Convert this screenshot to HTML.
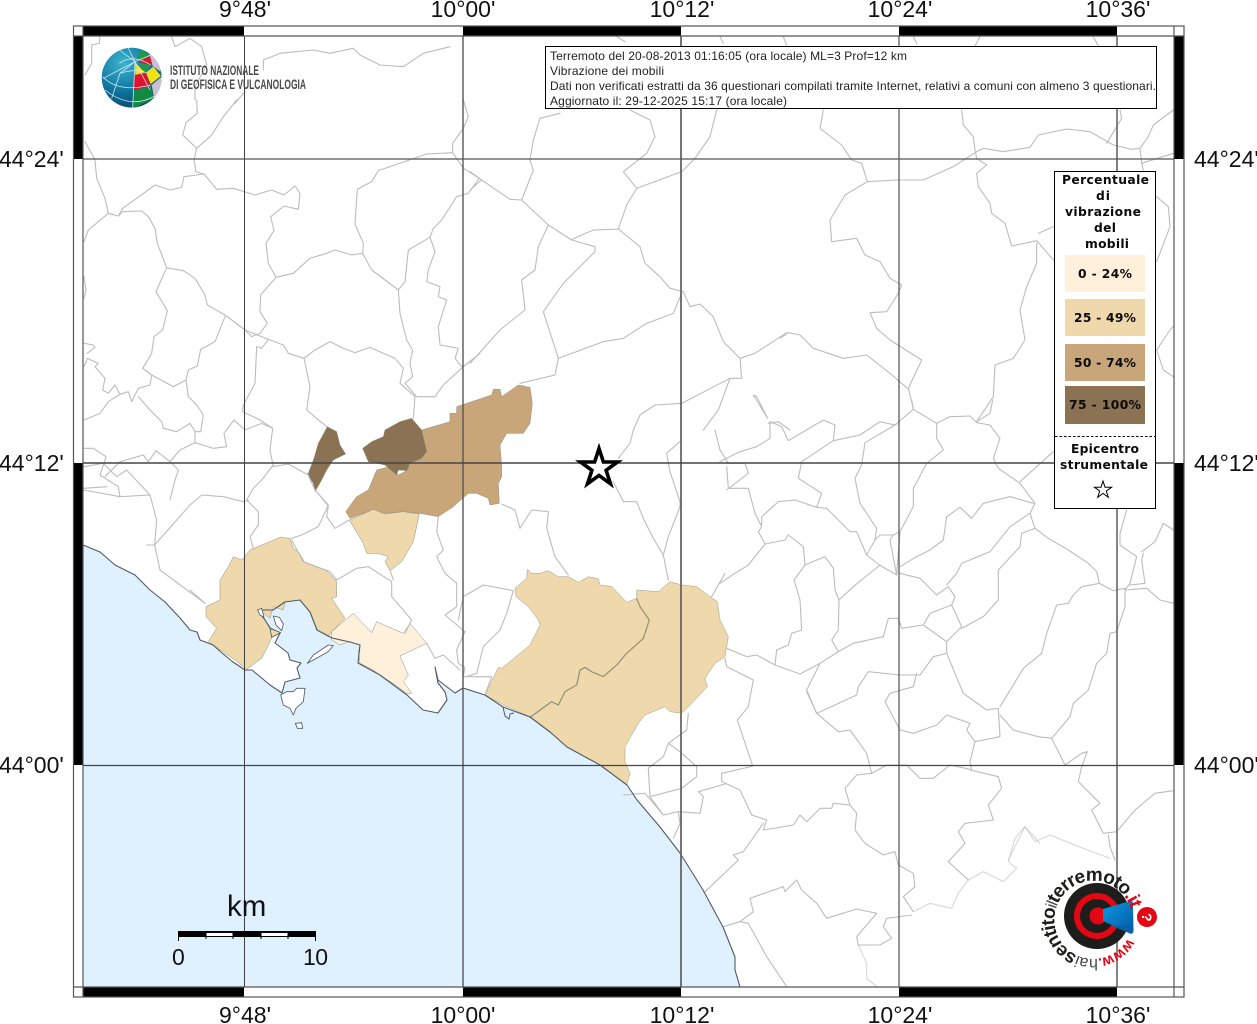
<!DOCTYPE html>
<html><head><meta charset="utf-8"><title>Vibrazione dei mobili</title>
<style>
html,body{margin:0;padding:0;background:#fff}
svg{display:block}
.ax{font-family:"Liberation Sans",sans-serif;font-size:23px;fill:#111}
.lg{font-family:"DejaVu Sans",sans-serif;font-weight:bold;font-size:12.3px;fill:#0a0a0a}
.in{font-family:"Liberation Sans",sans-serif;font-size:12px;fill:#222}
.m{fill:none;stroke:#bcbcbc;stroke-width:3.3;stroke-linejoin:round;stroke-linecap:round}
</style></head><body>
<svg width="1257" height="1024" viewBox="0 0 1257 1024" xmlns="http://www.w3.org/2000/svg">
<defs>
<filter id="bl" x="0" y="0" width="100%" height="100%" filterUnits="userSpaceOnUse"><feGaussianBlur stdDeviation=".35"/></filter>
<radialGradient id="gb" cx="35%" cy="25%" r="85%"><stop offset="0" stop-color="#3db4cf"/><stop offset=".55" stop-color="#0f76a0"/><stop offset="1" stop-color="#083f66"/></radialGradient>
<linearGradient id="mg" x1="0" y1="0" x2="1" y2="1"><stop offset="0" stop-color="#0a9ae0"/><stop offset="1" stop-color="#0558a5"/></linearGradient>
<clipPath id="gc"><circle cx="215" cy="203" r="90"/></clipPath>
<path id="tc2" d="M1127.7,938.3 A39,39 0 1 1 1132.2,916.6"/>
</defs>
<rect width="1257" height="1024" fill="#fff"/>

<!-- sea -->
<path fill="#dff1ff" d="M83,545 L100,552 L115,565 L135,575 L150,590 L165,602 L180,618 L190,630 L197,632 L200,640 L213,645 L222,653 L233,662 L245,670 L252,670 L270,685 L282,693 L285,682 L300,678 L297,668 L301,663 L290,660 L288,653 L275,643 L280,633 L270,628 L265,620 L258,610 L273,610 L285,602 L300,600 L310,612 L317,630 L332,638 L350,642 L360,645 L358,663 L380,675 L407,695 L423,710 L438,713 L447,700 L445,692 L438,683 L435,667 L438,680 L455,693 L463,688 L485,695 L503,707 L530,717 L550,732 L567,747 L600,765 L627,785 L637,800 L660,827 L680,853 L703,890 L723,927 L735,957 L735,970 L740,987 L83,987 Z"/>

<g filter="url(#bl)">
<!-- choropleth -->
<g transform="translate(190,380) scale(.33333)" stroke="#8f8f80" stroke-width="1.5" stroke-linejoin="round">
<path fill="#8a7253" d="M412,140 L440,155 L450,195 L467,222 L430,240 L410,270 L395,300 L375,335 L370,310 L353,285 L372,235 L385,190 Z"/>
<path fill="#c9a67a" d="M467,395 L500,350 L535,330 L560,270 L590,262 L625,285 L650,272 L665,245 L710,215 L695,150 L780,125 L780,100 L800,100 L800,80 L905,45 L910,28 L930,28 L935,50 L985,15 L1020,22 L1027,70 L1020,130 L1000,160 L950,160 L930,195 L935,260 L935,290 L925,310 L928,370 L900,375 L895,355 L860,340 L835,340 L790,380 L745,410 L690,400 L640,395 L580,400 L550,388 L480,415 Z"/>
<path fill="#8a7253" d="M518,205 L545,185 L580,170 L585,150 L630,125 L665,115 L695,150 L710,215 L695,235 L660,250 L650,272 L625,270 L620,285 L585,255 L535,245 Z"/>
<path fill="#eed8ac" d="M478,420 L550,388 L585,402 L640,395 L688,402 L670,485 L635,545 L600,572 L585,545 L595,530 L565,520 L530,520 L520,490 Z"/>
<path fill="#eed8ac" d="M48,680 L90,660 L90,600 L115,560 L130,530 L155,540 L180,510 L240,485 L270,472 L300,475 L310,505 L325,515 L345,548 L410,572 L440,605 L440,650 L425,655 L465,715 L425,755 L415,770 L380,750 L360,695 L330,660 L285,665 L280,690 L250,680 L240,715 L220,700 L205,690 L225,720 L240,740 L245,775 L215,835 L170,868 L135,840 L55,785 L80,745 L48,710 Z"/>
<path fill="#fff0dc" d="M425,755 L490,700 L545,758 L560,725 L640,760 L660,730 L710,790 L630,828 L655,885 L640,905 L665,940 L650,940 L610,910 L575,890 L550,870 L510,850 L505,815 L510,795 L480,785 L450,795 L425,780 Z"/>
</g>
<g transform="translate(470,430) scale(.33333)" stroke="#9b9a88" stroke-width="1.5" stroke-linejoin="round">
<path fill="#eed8ac" d="M45,795 L85,712 L95,715 L180,645 L210,585 L205,570 L175,530 L138,500 L135,475 L170,445 L172,418 L185,430 L210,430 L235,422 L265,440 L295,440 L325,457 L355,440 L385,447 L390,465 L425,470 L445,490 L470,517 L500,505 L500,480 L565,485 L600,455 L635,465 L680,470 L720,500 L742,515 L750,570 L775,620 L765,680 L735,700 L705,745 L712,770 L660,825 L635,850 L600,845 L585,830 L525,855 L505,880 L465,950 L465,995 L480,1030 L470,1065 L390,1005 L290,950 L240,905 L180,860 L100,825 Z"/>
<path fill="none" stroke="#85826f" stroke-width="3" d="M500,505 L510,530 L538,570 L520,625 L470,670 L440,705 L400,740 L365,725 L345,712 L330,720 L320,765 L285,785 L265,825 L245,815 L180,862"/>
</g>

<!-- municipal boundaries: NW -->
<g transform="translate(80,100) scale(.33333)">
<path class="m" d="M350,0 L352,40 L318,68 L308,105 L350,145 L342,180 L348,215 L372,222 L410,268 L460,265 L525,285 L575,270 L612,285 L645,258 L660,280 L655,328 L612,318 L572,350 L582,392 L558,430 L565,490 L588,532"/>
<path class="m" d="M470,0 L430,50 L395,105 L350,145"/>
<path class="m" d="M15,125 L45,180 L50,235 L75,295 L85,340 L115,348 L128,325 L170,295 L225,255 L270,270 L305,262 L312,230 L372,222"/>
<path class="m" d="M115,348 L128,335 L185,333 L205,350 L225,385 L232,430 L260,503 L310,512 L345,535 L375,585 L382,615 L435,645 L495,690 L515,710 L540,700 L562,670 L540,635 L542,585 L588,532 L640,520 L690,475 L740,460 L765,450 L815,465 L848,460 L875,510 L955,570 L975,545 L985,450 L1050,412 L1060,385 L1085,360 L1130,290 L1165,280 L1198,235 L1150,205 L1118,158 L1040,162 L895,212 L875,245 L832,268 L825,372 L850,430 L848,460"/>
<path class="m" d="M1118,158 L1118,130 L1150,85 L1165,50 L1150,0"/>
<path class="m" d="M85,340 L25,390 L12,425"/>
<path class="m" d="M260,503 L228,575 L262,632 L248,690 L222,710 L215,760 L188,805 L215,825 L280,860 L318,840 L325,810 L352,798 L362,748 L405,725 L435,650"/>
<path class="m" d="M215,825 L210,855 L175,865 L155,905 L145,875 L120,883 L105,855 L85,880 L68,870 L75,835 L45,800 L55,790 L22,775 L12,800 M12,730 L40,735 L45,742 L22,760"/>
<path class="m" d="M120,883 L85,905 L60,940 L12,960"/>
<path class="m" d="M175,890 L210,930 L245,965 L250,985 L290,995 L330,970 L345,995 L362,995 L370,945 L350,915 L325,890 L318,840"/>
<path class="m" d="M345,995 L345,1028 L400,1045 L440,1040 L432,1000 L462,960 L495,990 L545,970 L578,985 L570,1050 L580,1100 L625,1092 L685,1125"/>
<path class="m" d="M270,1085 L300,1050 L345,1028"/>
<path class="m" d="M490,915 L488,935 L540,960 L578,985"/>
<path class="m" d="M490,915 L525,850 L530,740 L545,745 L565,718 L610,735 L625,760 L672,775 L690,860 L680,930 L740,980"/>
<path class="m" d="M495,690 L565,718"/>
<path class="m" d="M672,775 L705,750 L750,725 L790,745 L825,758 L870,742 L945,775 L970,805 L960,850 L1005,890 L1000,955"/>
<path class="m" d="M955,570 L960,640 L980,720 L998,750 L990,790 L998,830 L975,850 L1010,890 L1065,890 L1090,855 L1150,800 L1200,760"/>
<path class="m" d="M1050,412 L1065,455 L1045,510 L1040,545 L1080,560 L1075,590 L1100,600 L1075,680 L1080,735 L1135,745 L1125,775 L1145,800"/>
<path class="m" d="M12,1045 L40,1045 L78,1070 L60,1125 L115,1160 L120,1190"/>
<path class="m" d="M12,1165 L80,1160"/>
<path class="m" d="M75,1130 L120,1085 L190,1065 L205,1085 L228,1052 L270,1085 L295,1110 L285,1140 L270,1200"/>
<path class="m" d="M12,530 L18,570 L12,595"/>
</g>

<!-- SW -->
<g transform="translate(190,380) scale(.33333)">
<path class="m" d="M250,255 L215,300 L190,325 L170,360 L205,395 L205,435 L180,470 L190,505"/>
<path class="m" d="M0,375 L35,345 L100,350 L160,365 L175,360"/>
<path class="m" d="M352,280 L375,330 L415,375 L385,440 L335,465 L305,475"/>
<path class="m" d="M380,335 L415,378 L410,410 L435,445 L478,420"/>
<path class="m" d="M305,480 L340,545 L420,575 L440,600 L500,565 L535,560 L605,605 L605,650 L665,720 L645,760"/>
<path class="m" d="M600,570 L610,600"/>
<path class="m" d="M745,410 L740,455 L760,510 L740,530 L765,580 L800,610 L800,680 L765,705 L825,755 L800,810 L805,850 L820,860"/>
<path class="m" d="M710,790 L735,835 L760,825 L810,870"/>
<path class="m" d="M825,860 L820,890 L905,890 L885,945"/>
<path class="m" d="M805,720 L820,650 L880,615 L970,632 L950,700 L930,750 L880,800 L860,880 L830,890"/>
<path class="m" d="M0,630 L45,670"/>
<path class="m" d="M-318,330 L-210,350 L-120,345 L-100,420 L-106,495 L0,375"/>
<path class="m" d="M-130,495 L-106,495 L-90,570 L45,670"/>
<path class="m" d="M-318,260 L-260,250 L-220,290 L-190,270 L-120,345"/>
</g>

<!-- centre south -->
<g transform="translate(470,430) scale(.33333)">
<path class="m" d="M490,0 L480,40 L445,85"/>
<path class="m" d="M430,155 L460,215 L500,215 L520,265 L550,325 L580,375 L595,450"/>
<path class="m" d="M635,30 L590,70 L600,125 L630,215 L630,230 L595,320 L580,375"/>
<path class="m" d="M95,222 L135,240 L150,295 L185,240 L235,245 L230,295 L255,380 L295,435"/>
<path class="m" d="M725,500 L765,430"/>
<path class="m" d="M735,0 L750,60 L775,100"/>
</g>

<!-- north centre -->
<g transform="translate(470,30) scale(.33333)">
<path class="m" d="M270,250 L210,265 L190,330 L180,390 L190,420 L155,510"/>
<path class="m" d="M0,480 L35,450 L120,508 L155,510 L235,585 L305,630 L375,650 L375,665 L280,760 L220,845 L265,985 L400,935 L460,925 L530,880 L610,850 L635,790"/>
<path class="m" d="M0,425 L35,450"/>
<path class="m" d="M235,585 L205,650 L195,720 L155,750 L165,840 L90,900 L0,1000"/>
<path class="m" d="M305,628 L370,600 L445,597 L510,650 L525,700 L570,740 L600,775 L640,785 L660,830 L690,822 L730,860 L760,935 L810,985 L855,970 L950,908"/>
<path class="m" d="M445,597 L470,525 L500,475 L460,425 L530,370 L555,320 L540,270 L480,240"/>
<path class="m" d="M500,475 L635,425 L675,385 L720,320 L740,240"/>
<path class="m" d="M265,985 L255,1035 L150,1060"/>
<path class="m" d="M810,985 L815,1045 L780,1045 L635,1120 L555,1125 L510,1155 L490,1200"/>
<path class="m" d="M780,1045 L745,1140 L700,1200"/>
<path class="m" d="M850,1095 L860,1100 L893,1165 Z"/>
<path class="m" d="M895,1180 L925,1175 L960,1200"/>
<path class="m" d="M440,20 L465,35 M750,20 L760,40 M940,20 L950,45"/>
</g>

<!-- NE -->
<g transform="translate(780,30) scale(.33333)">
<path class="m" d="M130,240 L120,295 L185,345 L215,390 L245,400 L262,455 L350,450 L430,450 L520,410 L590,365 L610,355 L670,365 L750,352 L775,315 L860,297 L930,305 L1000,345 L1055,358 L1080,355 L1085,400 L1180,370"/>
<path class="m" d="M545,240 L550,285 L580,320 L585,360 L590,385 L620,405 L590,430 L595,470 L630,520 L635,550 L675,580 L695,648 L770,632 L820,690"/>
<path class="m" d="M775,610 L820,590"/>
<path class="m" d="M770,640 L770,700 L740,770 L720,840 L735,930 L700,985 L645,1005 L640,1100 L590,1175"/>
<path class="m" d="M400,1135 L385,1075 L425,990 L330,930 L290,895 L270,848 L320,845 L355,790 L365,765 L330,745 L300,695 L255,675 L230,625 L155,635 L150,570 L195,495 L245,465 L262,455"/>
<path class="m" d="M0,925 L25,908 L60,915 L100,955 L190,985 L260,975 L330,1030 L382,1075"/>
<path class="m" d="M1020,240 L1025,265 L980,340"/>
<path class="m" d="M1180,240 L1120,285 L1105,320 L1080,355"/>
<path class="m" d="M1130,500 L1165,530 L1170,590 L1130,695"/>
<path class="m" d="M1130,960 L1170,900 L1180,890 M1130,960 L1150,1020 L1180,1040"/>
<path class="m" d="M1010,390 L1010,420 M1085,400 L1090,420"/>
<path class="m" d="M400,20 L410,40 M600,20 L585,48 M940,20 L955,48"/>
</g>

<!-- E centre -->
<g transform="translate(720,400) scale(.33333)">
<path class="m" d="M0,185 L60,155 L110,140 L150,115 L150,65 L185,80 L205,122 L310,60 L345,75 L340,122 L420,105 L480,65 L525,75 L580,28 L650,70 L690,50 L750,48 L770,68 L810,75 L840,115 L820,175 L835,205 L900,250 L945,310 L930,340 L945,385"/>
<path class="m" d="M580,28 L575,0 M770,65 L810,40 L818,0"/>
<path class="m" d="M340,122 L245,185 L235,235 L305,280 L290,322"/>
<path class="m" d="M530,72 L435,128 L425,195 L405,235 L420,310 L470,385 L465,420 L440,465 L478,495 L530,525 L540,395 L580,320 L580,265 L620,190 L670,150 L650,115 L650,70"/>
<path class="m" d="M465,420 L480,405 L520,405 L540,395 M520,405 L510,420 L530,525"/>
<path class="m" d="M20,200 L25,265 L85,265 L105,340 L125,380 L115,395 L135,432 L195,420 L205,405 L250,440 L255,495 L315,470 L340,505 L345,570 L357,600 L355,690 L335,720 L355,755 L300,790 L240,822 L165,795 L170,750 L205,735 L215,700 L245,690 L240,600 L222,540 L255,495"/>
<path class="m" d="M20,270 L85,220 L75,190 L20,190"/>
<path class="m" d="M125,375 L125,350 L175,305 L225,300 L290,322 L320,325 L390,395 L410,395 L440,465"/>
<path class="m" d="M135,432 L85,495 L45,520 L0,550"/>
<path class="m" d="M357,600 L400,560 L480,495"/>
<path class="m" d="M355,755 L400,730 L490,710 L505,655 L535,655 L545,685 L610,675 L630,640 L695,615 L705,590 L685,560 L650,585 L640,575 L600,535 L540,520"/>
<path class="m" d="M540,500 L590,470 L630,450 L670,420 L680,350 L720,322 L755,355 L790,310 L870,290 L940,310"/>
<path class="m" d="M680,555 L710,520 L725,490 L810,455 L870,380 L930,340"/>
<path class="m" d="M610,675 L680,725 L725,680 L695,615"/>
<path class="m" d="M725,685 L790,650 L835,600 L835,510 L900,440 L905,400 L945,385"/>
<path class="m" d="M680,725 L680,760 L640,770 L600,825 L540,825 L445,815 L415,860 L410,885 L290,940 L260,870 L300,790"/>
<path class="m" d="M590,820 L580,860 L510,880 L495,905 L540,990 L580,1000 L650,975 L680,945 L750,970 L740,990 L765,1025 L840,1010 L835,925 L800,930 L730,880 L680,760"/>
<path class="m" d="M765,1025 L750,1085 L755,1110"/>
<path class="m" d="M15,775 L20,800 L100,840"/>
<path class="m" d="M20,745 L80,770 L110,765 L165,795"/>
<path class="m" d="M900,245 L1000,155"/>
</g>

<!-- SE -->
<g transform="translate(620,680) scale(.33333)">
<path class="m" d="M400,0 L385,80 L352,120 L398,258"/>
<path class="m" d="M560,35 L590,100 L655,155 L690,150 L740,220 L755,280"/>
<path class="m" d="M1050,270 L1135,290 L1145,325 L1105,375 L1120,420 L1035,430 L1015,455 L1035,490 L985,545 L1045,600"/>
<path class="m" stroke-opacity=".6" d="M1045,600 L1090,575 L1150,605 L1190,565 L1165,545 L1185,475 L1215,440 L1260,490"/>
<path class="m" stroke-opacity=".6" d="M1045,600 L1015,640 L995,685 L930,670 L880,695"/>
<path class="m" d="M880,695 L850,650 L885,620 L880,580 L835,555 L825,515 L790,525 L735,490 L705,450 L710,400 L690,375 L640,370 L635,385 L600,385 L560,425 L540,405 L520,435 L430,450 L440,420 L395,405 L360,330 L305,305 L305,280 L400,258"/>
<path class="m" d="M755,280 L710,285 L675,325 L690,375"/>
<path class="m" d="M1050,268 L990,255 L940,295 L900,295 L860,255 L800,255 L755,280"/>
<path class="m" d="M205,100 L200,150 L145,190 L130,230 L85,265 L90,350"/>
<path class="m" d="M145,190 L180,215 L230,260 L230,290 L185,325 L90,350 L130,405 L175,395 L240,400 L250,350 L235,335 L315,312"/>
<path class="m" d="M10,345 L75,340 L130,405"/>
<path class="m" d="M175,395 L180,430 L160,475"/>
<path class="m" d="M430,430 L370,515 L340,525 L355,540 L255,635"/>
<path class="m" d="M310,740 L360,725 L400,695 L390,655 L490,620 L495,635 L530,600 L545,630 L590,670 L620,715 L710,687 L770,700 L710,770 L715,795 L780,795 L815,775 L790,740 L800,715 L875,705"/>
<path class="m" d="M360,725 L385,730 L440,830 L500,920"/>
<path class="m" stroke-opacity=".6" d="M715,795 L740,850 L740,895 L770,920"/>
</g>

<!-- far E -->
<g transform="translate(1000,500) scale(.33333)">
<path class="m" d="M105,85 L145,115 L205,150 L265,190 L290,215 L298,250 L340,272 L375,265 L375,320 L350,395 L330,400 L320,460 L290,490 L265,570 L220,610 L210,650 L155,715 L195,795"/>
<path class="m" d="M298,250 L245,260 L220,285 L205,310 L170,315 L140,400 L125,460 L70,505 L25,580 L0,620"/>
<path class="m" d="M0,645 L40,690 L115,710 L155,715"/>
<path class="m" d="M380,30 L360,100 L360,135 L410,170 L400,210 L390,250 L375,270 L440,265 L480,300 L520,310"/>
<path class="m" d="M430,160 L425,180 L435,250 L390,255"/>
<path class="m" d="M425,155 L465,125 L490,70 L520,90"/>
<path class="m" d="M195,795 L245,760 L262,755 L245,800 L235,845 L300,910 L275,930 L310,1000 L350,995 L405,930 L465,880 L520,872"/>
<path class="m" d="M325,1005 L330,1040 L345,1080"/>
<path class="m" stroke-opacity=".6" d="M25,1080 L75,980 L105,1025 L150,1005 L250,1045 L330,1075"/>
</g>

<!-- NW corner -->
<g transform="translate(60,10) scale(.33333)">
<path class="m" d="M120,80 L118,100 L95,105 L95,160 L75,195"/>
<path class="m" d="M335,80 L345,110 L390,85 L425,110 L440,165 L405,230 L405,270"/>
<path class="m" d="M555,245 L525,280"/>
<path class="m" d="M610,180 L610,150 L660,130 L760,120 L810,130 L880,115 L900,135 L960,165 L1030,170 L1090,130 L1170,110"/>
</g>

<!-- coast -->
<path fill="none" stroke="#4f5a60" stroke-width="1.1" stroke-linejoin="round" d="M83,545 L100,552 L115,565 L135,575 L150,590 L165,602 L180,618 L190,630 L197,632 L200,640 L213,645 L222,653 L233,662 L245,670 L252,670 L270,685 L282,693 L285,682 L300,678 L297,668 L301,663 L290,660 L288,653 L275,643 L280,633 L270,628 L265,620 L258,610 L273,610 L285,602 L300,600 L310,612 L317,630 L332,638 L350,642 L360,645 L358,663 L380,675 L407,695 L423,710 L438,713 L447,700 L445,692 L438,683 L435,667 L438,680 L455,693 L463,688 L485,695 L503,707 L530,717 L550,732 L567,747 L600,765 L627,785 L637,800 L660,827 L680,853 L703,890 L723,927 L735,957 L735,970 L740,987"/>
<g transform="translate(190,380) scale(.33333)" fill="#fff" stroke="#4f5a60" stroke-width="2.5" stroke-linejoin="round">
<path d="M352,850 L370,825 L415,795 L430,797 L415,815 L370,840 Z"/>
<path d="M272,945 L290,935 L310,935 L320,925 L345,925 L340,965 L318,985 L310,1005 L300,985 L280,975 Z"/>
<path d="M316,1030 L335,1028 L338,1045 L322,1045 Z"/>
<path d="M250,708 L268,712 L280,732 L275,752 L258,735 Z"/>
<path d="M203,690 L215,685 L222,712 L210,705 Z"/>
<path d="M240,745 L272,758 L245,772 Z" fill="#eed8ac"/>
</g>
<path fill="none" stroke="#4f5a60" stroke-width="1" d="M503,707 L505,716 L509,719 L510,714 L514,713"/>
</g>

<!-- grid -->
<g fill="none">
<path d="M244.5,36V987" stroke="#3f3f3f" stroke-width="1"/>
<path d="M463,36V987" stroke="#555" stroke-width="1.4"/>
<path d="M681,36V987" stroke="#666" stroke-width="1.8"/>
<path d="M899,36V987" stroke="#3f3f3f" stroke-width="1.1"/>
<path d="M1117,36V987" stroke="#666" stroke-width="1.6"/>
<path d="M83,159H1174" stroke="#555" stroke-width="1.3"/>
<path d="M83,463H1174" stroke="#444" stroke-width="1.4"/>
<path d="M83,765.5H1174" stroke="#444" stroke-width="1.2"/>
</g>

<!-- frame -->
<g fill="#000">
<rect x="83" y="26" width="161" height="10"/><rect x="463" y="26" width="218" height="10"/><rect x="899" y="26" width="218" height="10"/>
<rect x="83" y="987" width="161" height="10"/><rect x="463" y="987" width="218" height="10"/><rect x="899" y="987" width="218" height="10"/>
<rect x="74" y="36" width="9" height="123"/><rect x="74" y="463" width="9" height="302"/>
<rect x="1174" y="36" width="10" height="123"/><rect x="1174" y="463" width="10" height="302"/>
</g>
<g fill="none" stroke="#555" stroke-width="1.2">
<rect x="73.5" y="26" width="1110.5" height="971"/>
<path d="M83,26V997M1174,26V997M73.5,36H1184M73.5,987H1184"/>
</g>

<!-- INGV logo -->
<g transform="translate(60,10) scale(.33333)">
<g clip-path="url(#gc)">
<circle cx="215" cy="203" r="90" fill="url(#gb)"/>
<path fill="#1f9a45" d="M228,152 L245,120 L275,140 L250,150 Z"/>
<path fill="#e0142f" d="M232,155 L272,138 L276,166 Z"/>
<path fill="#c9bfd2" d="M268,130 L300,150 L308,190 L278,168 Z"/>
<path fill="#f2e213" d="M225,158 L255,187 L226,195 Z"/>
<path fill="#1f9a45" d="M235,158 L272,166 L256,186 Z"/>
<path fill="#f2e213" d="M258,188 L280,170 L303,198 L272,222 Z"/>
<path fill="#e0142f" d="M222,195 L258,190 L272,228 L222,240 Z"/>
<path fill="#1f9a45" d="M300,180 L310,190 L310,205 L303,196 Z"/>
<path fill="#c9bfd2" d="M275,225 L305,200 L302,245 L282,262 Z"/>
<path fill="#e0142f" d="M282,262 L300,245 L285,270 Z"/>
<path fill="#128a45" d="M218,243 L272,228 L282,265 L218,296 Z"/>
<g fill="none" stroke="#d8eef5" stroke-width="2.2">
<path d="M225,155 L218,293"/>
<path d="M225,155 L205,115 M225,155 L178,120 M225,155 L180,190 L155,265 M225,155 L130,205 M225,155 L270,240 M225,155 L272,135"/>
<path d="M178,160 Q220,130 272,165"/>
<path d="M180,190 Q225,175 258,188"/>
<path d="M128,200 Q175,250 272,225"/>
<path d="M135,240 Q210,300 285,258"/>
</g>
</g>
</g>
<text x="170" y="75" font-family="'Liberation Sans',sans-serif" font-size="14" font-weight="bold" fill="#4a4a4a" textLength="89" lengthAdjust="spacingAndGlyphs">ISTITUTO NAZIONALE</text>
<text x="170" y="89" font-family="'Liberation Sans',sans-serif" font-size="14" font-weight="bold" fill="#4a4a4a" textLength="136" lengthAdjust="spacingAndGlyphs">DI GEOFISICA E VULCANOLOGIA</text>

<!-- info box -->
<rect x="545.5" y="46.5" width="611" height="62" fill="#fff" stroke="#000" stroke-width="1"/>
<text class="in" x="550" y="60" textLength="357">Terremoto del 20-08-2013 01:16:05 (ora locale) ML=3 Prof=12 km</text>
<text class="in" x="550" y="75" textLength="114">Vibrazione dei mobili</text>
<text class="in" x="550" y="90" textLength="606">Dati non verificati estratti da 36 questionari compilati tramite Internet, relativi a comuni con almeno 3 questionari.</text>
<text class="in" x="550" y="105" textLength="237">Aggiornato il: 29-12-2025 15:17 (ora locale)</text>

<!-- legend -->
<rect x="1054.5" y="171.5" width="101" height="337" fill="#fff" stroke="#000" stroke-width="1"/>
<text class="lg" x="1062" y="184" textLength="87">Percentuale</text>
<text class="lg" x="1096" y="200" textLength="14">di</text>
<text class="lg" x="1065" y="216" textLength="76">vibrazione</text>
<text class="lg" x="1094" y="232" textLength="22">del</text>
<text class="lg" x="1085" y="248" textLength="44">mobili</text>
<rect x="1065" y="255" width="80" height="37" fill="#fff0dc"/>
<rect x="1065" y="299" width="80" height="37" fill="#eed8ac"/>
<rect x="1065" y="344" width="80" height="37" fill="#c9a67a"/>
<rect x="1065" y="386" width="80" height="38" fill="#8a7253"/>
<text class="lg" x="1078" y="278" textLength="54">0 - 24%</text>
<text class="lg" x="1074" y="322" textLength="62">25 - 49%</text>
<text class="lg" x="1074" y="367" textLength="62">50 - 74%</text>
<text class="lg" x="1069" y="409" textLength="72">75 - 100%</text>
<path d="M1055,436.5H1155" stroke="#000" stroke-width="1" stroke-dasharray="2.5,2"/>
<text class="lg" x="1071" y="453" textLength="68">Epicentro</text>
<text class="lg" x="1060" y="469" textLength="88">strumentale</text>
<path d="M1103,481 L1105,487.2 L1111.6,487.2 L1106.3,491.1 L1108.3,497.3 L1103,493.4 L1097.7,497.3 L1099.7,491.1 L1094.4,487.2 L1101,487.2 Z" fill="#fff" stroke="#000" stroke-width="1"/>

<!-- epicentre star -->
<path d="M599,448.5 L603.4,462 L617.5,462 L606.1,470.3 L610.5,483.8 L599,475.45 L587.5,483.8 L591.9,470.3 L580.5,462 L594.6,462 Z" fill="#fff" stroke="#000" stroke-width="3.6" stroke-miterlimit="10"/>

<!-- scale bar -->
<g>
<rect x="178" y="931" width="138" height="6" fill="#000"/>
<rect x="206.5" y="933" width="26.5" height="3" fill="#fff"/>
<rect x="261" y="933" width="27" height="3" fill="#fff"/>
<path d="M178.5,931V941M315.5,931V941M206,931V939M233,931V939M261,931V939M288,931V939" stroke="#000" stroke-width="1"/>
<text x="227" y="916" font-family="'Liberation Sans',sans-serif" font-size="29.5" fill="#111">km</text>
<text class="ax" x="172" y="965">0</text>
<text class="ax" x="303" y="965" textLength="25">10</text>
</g>

<!-- hai sentito logo -->
<g>
<circle cx="1097" cy="916" r="33" fill="#1d1d1b"/>
<circle cx="1097" cy="916" r="20" fill="none" stroke="#e30613" stroke-width="6"/>
<circle cx="1098" cy="916" r="8.5" fill="#e30613"/>
<path d="M1103,909 L1130,901 Q1133,900 1133,904 L1133.5,931 Q1133,935 1129,933 L1103,921 Z" fill="url(#mg)"/>
<path d="M1112,926 L1133,925 L1133,932 Q1132,935 1129,933 Z" fill="#0a5fa8"/>
<circle cx="1147" cy="917" r="10" fill="#e30613"/>
<text x="0" y="0" transform="translate(1142,913) rotate(90)" font-family="'Liberation Sans',sans-serif" font-weight="bold" font-size="14" fill="#fff">?</text>
<text font-family="'Liberation Sans',sans-serif" font-size="19" letter-spacing="-.95" fill="#1d1d1b"><textPath href="#tc2"><tspan fill="#e30613" font-weight="bold" font-size="15" letter-spacing="-.3">www.</tspan><tspan fill="#444" font-size="16" letter-spacing="-.2">hai</tspan><tspan font-weight="bold">sentito</tspan><tspan fill="#444" font-size="16">il</tspan><tspan font-weight="bold">terremoto</tspan><tspan fill="#e30613" font-weight="bold">.it</tspan></textPath></text>
</g>

<!-- axis labels -->
<g class="ax" text-anchor="middle">
<text x="245" y="17">9°48'</text><text x="463" y="17">10°00'</text><text x="682" y="17">10°12'</text><text x="900" y="17">10°24'</text><text x="1118" y="17">10°36'</text>
<text x="245" y="1023">9°48'</text><text x="463" y="1023">10°00'</text><text x="682" y="1023">10°12'</text><text x="900" y="1023">10°24'</text><text x="1118" y="1023">10°36'</text>
</g>
<g class="ax">
<text x="-1" y="167">44°24'</text><text x="-1" y="471">44°12'</text><text x="-1" y="773">44°00'</text>
<text x="1194" y="167">44°24'</text><text x="1194" y="471">44°12'</text><text x="1194" y="773">44°00'</text>
</g>
</svg>
</body></html>
